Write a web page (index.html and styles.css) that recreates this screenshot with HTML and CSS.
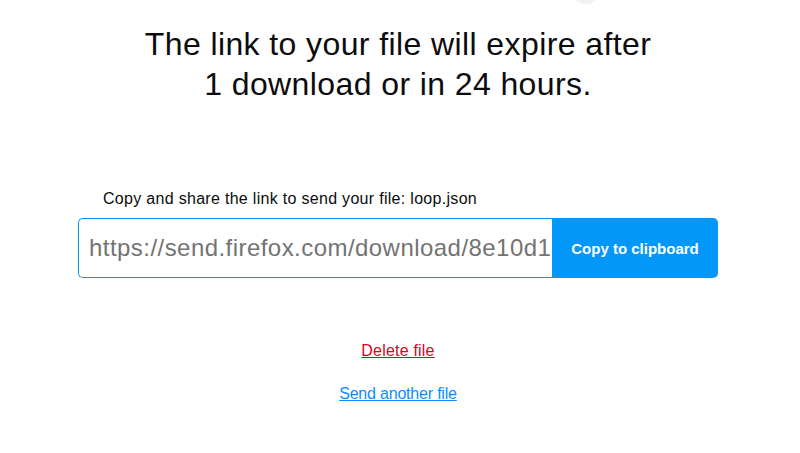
FILE: index.html
```html
<!DOCTYPE html>
<html>
<head>
<meta charset="utf-8">
<link rel="stylesheet" href="styles.css">
</head>
<body>
<div class="blob"></div>
<main class="page">
  <h1 class="title">The link to your file will expire after<br>1 download or in 24 hours.</h1>
  <section class="share">
    <p class="label">Copy and share the link to send your file: loop.json</p>
    <div class="copy-row">
      <div class="link-input">https://send.firefox.com/download/8e10d1a7c3/#Kq2lPx9</div>
      <button class="copy-btn">Copy to clipboard</button>
    </div>
  </section>
  <a class="delete" href="#">Delete file</a>
  <a class="another" href="#">Send another file</a>
</main>
</body>
</html>
```
FILE: styles.css
```css
html, body {
  margin: 0;
  padding: 0;
  background: #ffffff;
}
body {
  font-family: "Liberation Sans", Arial, sans-serif;
  color: #000;
  width: 800px;
  height: 453px;
  overflow: hidden;
  position: relative;
}
.blob {
  position: absolute;
  left: 571px;
  top: -26px;
  width: 30px;
  height: 30px;
  border-radius: 50%;
  background: #f2f2f4;
}
.page {
  display: flex;
  flex-direction: column;
  align-items: center;
  padding-top: 24px;
  padding-right: 4px;
}
.title {
  margin: 0;
  font-weight: normal;
  font-size: 32px;
  letter-spacing: 0.4px;
  line-height: 40px;
  text-align: center;
  color: #0c0c0d;
}
.share {
  margin-top: 86px;
  width: 640px;
  display: flex;
  flex-direction: column;
}
.label {
  margin: 0 0 10px 25px;
  font-size: 16px;
  letter-spacing: 0.3px;
  line-height: 18px;
  color: #0c0c0d;
}
.copy-row {
  display: flex;
  height: 60px;
}
.link-input {
  flex: 1;
  box-sizing: border-box;
  border: 1px solid #0297f8;
  border-right: none;
  border-radius: 5px 0 0 5px;
  padding: 0 0 0 10px;
  font-size: 24px;
  letter-spacing: 0.45px;
  line-height: 58px;
  color: #737373;
  white-space: nowrap;
  overflow: hidden;
}
.copy-btn {
  width: 166px;
  border: none;
  border-radius: 0 5px 5px 0;
  background: #0297f8;
  color: #fff;
  font-family: "Liberation Sans", Arial, sans-serif;
  font-weight: bold;
  font-size: 15px;
  padding: 0;
}
.delete {
  margin-top: 64px;
  font-size: 16px;
  letter-spacing: 0.2px;
  line-height: 18px;
  color: #d70022;
}
.another {
  margin-top: 25px;
  font-size: 16px;
  letter-spacing: -0.2px;
  line-height: 18px;
  color: #0a8dff;
}
```
